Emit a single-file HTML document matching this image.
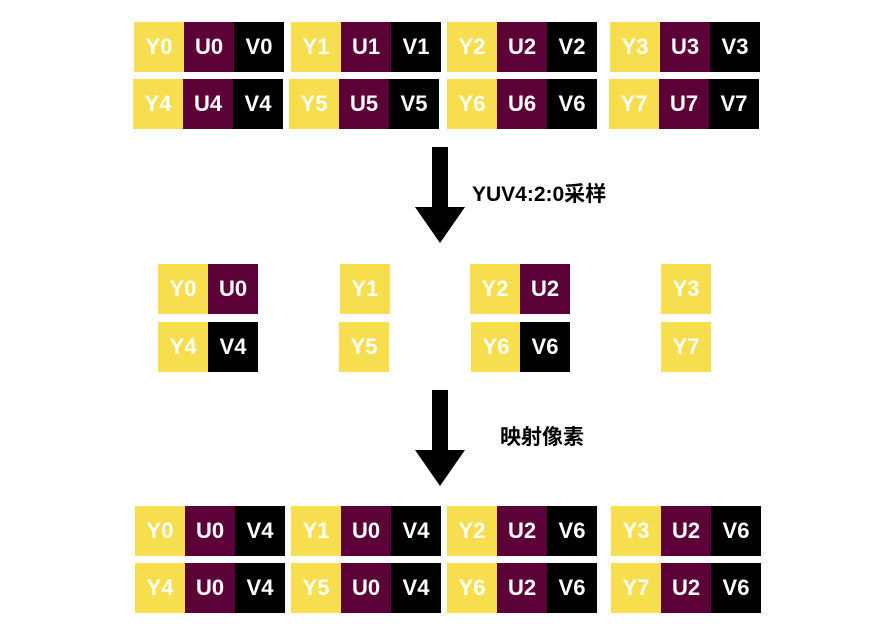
<!DOCTYPE html>
<html><head><meta charset="utf-8"><style>
body{margin:0;width:890px;height:636px;background:#fff;position:relative;overflow:hidden;font-family:"Liberation Sans","Noto Sans CJK SC",sans-serif}
.c{position:absolute;width:50px;height:50px;color:#fff;font-weight:bold;font-size:22px;line-height:50px;text-align:center}
.y{background:#F7DE4F}.u{background:#5C0038}.v{background:#000}
.t{position:absolute;font-weight:bold;font-size:21px;color:#000}
</style></head><body>
<svg style="position:absolute;left:0;top:0" width="890" height="636">
<rect x="432" y="147" width="16" height="61" fill="#000"/>
<polygon points="415,207 465,207 440,243" fill="#000"/>
<rect x="432" y="390" width="16" height="61" fill="#000"/>
<polygon points="415,450 465,450 440,486" fill="#000"/>
</svg>
<div class="t" style="left:472px;top:178px">YUV4:2:0采样</div>
<div class="t" style="left:500px;top:421px">映射像素</div>
<script>
var g=document.body;
function cell(x,y,cls,txt){var d=document.createElement('div');d.className='c '+cls;d.style.left=x+'px';d.style.top=y+'px';d.textContent=txt;g.appendChild(d);}
var top1=[134,291,447,610],top2=[133,289,447,609];
for(var i=0;i<4;i++){
 cell(top1[i],22,'y','Y'+i);cell(top1[i]+50,22,'u','U'+i);cell(top1[i]+100,22,'v','V'+i);
 var j=i+4;cell(top2[i],79,'y','Y'+j);cell(top2[i]+50,79,'u','U'+j);cell(top2[i]+100,79,'v','V'+j);
}
cell(158,264,'y','Y0');cell(208,264,'u','U0');
cell(158,322,'y','Y4');cell(208,322,'v','V4');
cell(340,264,'y','Y1');cell(339,322,'y','Y5');
cell(470,264,'y','Y2');cell(520,264,'u','U2');
cell(471,322,'y','Y6');cell(520,322,'v','V6');
cell(661,264,'y','Y3');cell(661,322,'y','Y7');
var b=[135,291,447,611],us=['U0','U0','U2','U2'],vs=['V4','V4','V6','V6'];
for(var i=0;i<4;i++){
 cell(b[i],506,'y','Y'+i);cell(b[i]+50,506,'u',us[i]);cell(b[i]+100,506,'v',vs[i]);
 cell(b[i],563,'y','Y'+(i+4));cell(b[i]+50,563,'u',us[i]);cell(b[i]+100,563,'v',vs[i]);
}
</script>
</body></html>
